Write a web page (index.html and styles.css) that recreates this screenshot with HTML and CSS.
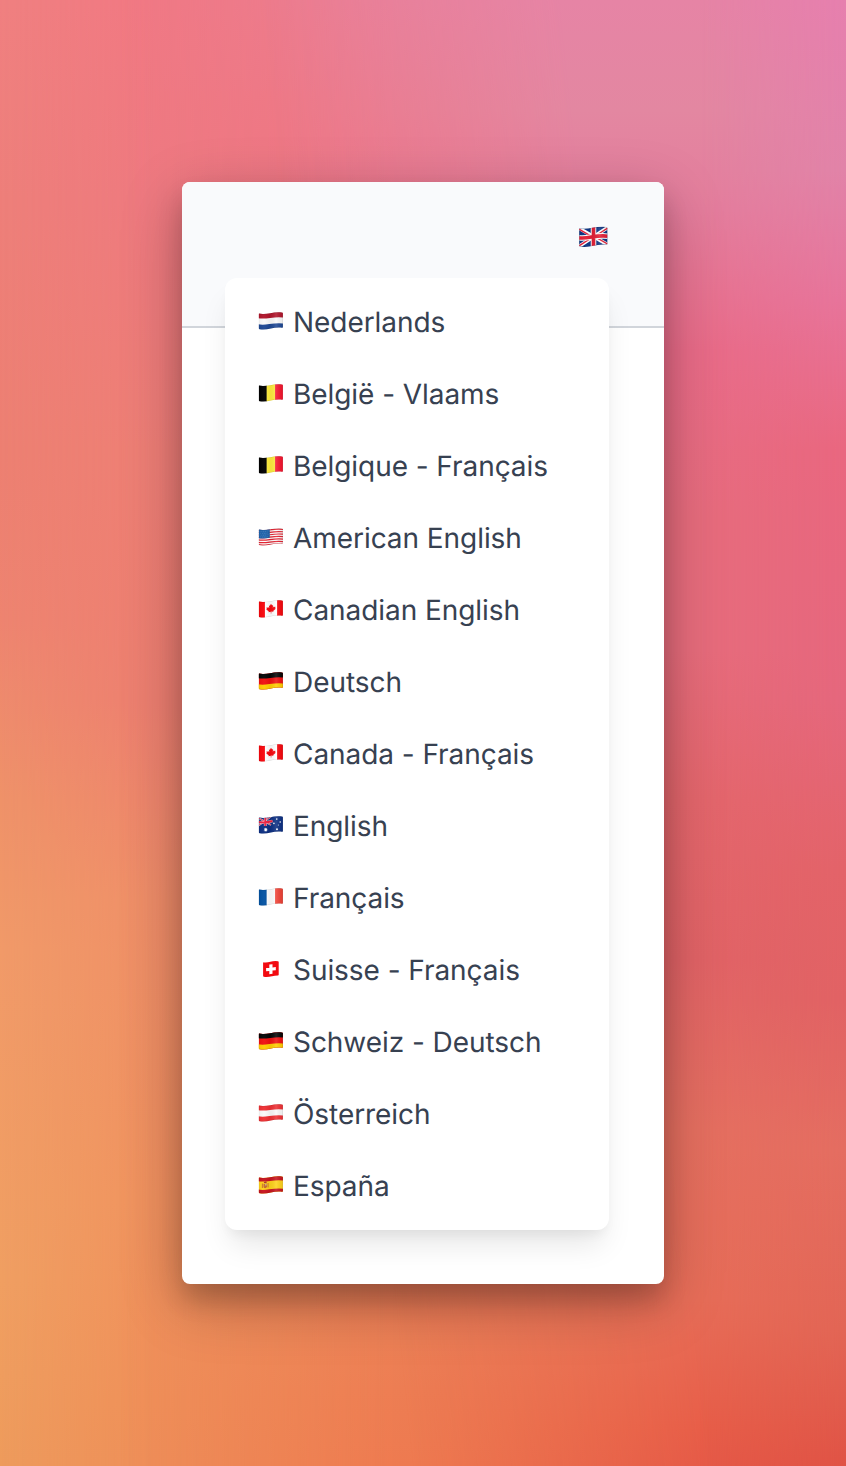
FILE: index.html
```html
<!DOCTYPE html>
<html lang="en">
<head>
<meta charset="utf-8">
<title>Language menu</title>
<link rel="stylesheet" href="styles.css">
</head>
<body>
<svg class="defs" aria-hidden="true">
  <defs>
    <clipPath id="wave"><path d="M.9 2.6C8 4.2 14 .2 23.5 1.4Q24.4 1.6 24.4 2.3V15.9Q24.4 16.9 23.5 16.7C15 15.4 9 19.8 1 18.2Q.2 18 .2 17.3V3.3Q.2 2.4.9 2.6Z"/></clipPath>
    <linearGradient id="shine">
      <stop offset="0" stop-color="#000" stop-opacity=".04"/>
      <stop offset=".22" stop-color="#fff" stop-opacity=".04"/>
      <stop offset=".45" stop-color="#000" stop-opacity=".05"/>
      <stop offset=".72" stop-color="#fff" stop-opacity=".12"/>
      <stop offset="1" stop-color="#000" stop-opacity=".06"/>
    </linearGradient>
    <path id="curve" d="M-1 2.3C8 4.5 14 0 26 1.9"/>
    <path id="fold" d="M.2 2.5C8 4.2 14 .2 24.4 1.6V16.9C15 15.4 9 19.8 .2 18Z" fill="url(#shine)" stroke="#000" stroke-opacity=".22" stroke-width=".6"/>
    <symbol id="de" viewBox="0 0 25 20"><g clip-path="url(#wave)"><path fill="#f01010" d="M0 0h25v20H0z"/><g fill="none" stroke-width="5.4"><use href="#curve" y="2" stroke="#050505"/><use href="#curve" y="13.5" stroke="#ffce00"/></g><use href="#fold"/></g></symbol>
    <symbol id="nl" viewBox="0 0 25 20"><g clip-path="url(#wave)"><path fill="#fafafa" d="M0 0h25v20H0z"/><g fill="none" stroke-width="5.4"><use href="#curve" y="2" stroke="#b0152b"/><use href="#curve" y="13.5" stroke="#1e4894"/></g><use href="#fold"/></g></symbol>
    <symbol id="at" viewBox="0 0 25 20"><g clip-path="url(#wave)"><path fill="#fafafa" d="M0 0h25v20H0z"/><g fill="none" stroke-width="5.4" stroke="#ee3034"><use href="#curve" y="2"/><use href="#curve" y="13.5"/></g><use href="#fold"/></g></symbol>
    <symbol id="be" viewBox="0 0 25 20"><g clip-path="url(#wave)"><path fill="#000" d="M0 0h8.4v20H0z"/><path fill="#ffec3c" d="M8.2 0h8.5v20H8.2z"/><path fill="#f5142d" d="M16.6 0H25v20h-8.4z"/><use href="#fold"/></g></symbol>
    <symbol id="fr" viewBox="0 0 25 20"><g clip-path="url(#wave)"><path fill="#0352a2" d="M0 0h8.4v20H0z"/><path fill="#fff" d="M8.2 0h8.5v20H8.2z"/><path fill="#ef4135" d="M16.6 0H25v20h-8.4z"/><use href="#fold"/></g></symbol>
    <symbol id="ca" viewBox="0 0 25 20"><g clip-path="url(#wave)"><path fill="#fff" d="M0 0h25v20H0z"/><path fill="#f8060c" d="M0 0h6.4v20H0zM18.6 0H25v20h-6.4z"/><path fill="#f8060c" d="m12.5 4.7 1.1 1.9 1-.5-.3 2.6 1.2-1.4.3.8 1.3-.4-.5 1.5.7.5-2.6 2.2.3.9-2.2-.2v1.8h-.5v-1.7l-2.3.6.2-1-2.5-1.8.7-.6-.6-1.3 1.4.1.2-.8 1.4 1.2-.4-2.7 1 .4z"/><use href="#fold"/></g></symbol>
    <symbol id="us" viewBox="0 0 25 20"><g clip-path="url(#wave)"><path fill="#fff" d="M0 0h25v20H0z"/><g fill="none" stroke="#e3202f" stroke-width="1.22"><use href="#curve" y=".6"/><use href="#curve" y="3.05"/><use href="#curve" y="5.5"/><use href="#curve" y="7.95"/><use href="#curve" y="10.4"/><use href="#curve" y="12.85"/><use href="#curve" y="15.3"/></g><path fill="#1d62ab" d="M0 1C5 4 8 2 11.3 1.4V10.6C7 11.6 4 11.9 0 11.2Z"/><g fill="none" stroke="#fff" stroke-opacity=".35" stroke-width=".6" stroke-dasharray=".6 1.2"><path d="M1.2 4.4q5 .8 9.5-.8M1.8 6.2q5 .8 9-.8M1.2 8q5 .8 9.5-.8M1.8 9.8q5 .8 9-.8"/></g><use href="#fold"/></g></symbol>
    <symbol id="au" viewBox="0 0 25 20"><g clip-path="url(#wave)"><path fill="#0c2f83" d="M0 0h25v20H0z"/><path d="m0 3 12.5 7M0 10.5l12.5-9" stroke="#fff" stroke-opacity=".8" stroke-width="1.6"/><path d="m0 3 12.5 7M0 10.5l12.5-9" stroke="#e92640" stroke-width=".9"/><path d="M6.8 1v10M0 7q6 1.3 14-1" fill="none" stroke="#fff" stroke-opacity=".8" stroke-width="2.8"/><path d="M6.8 1v10M0 7q6 1.3 14-1" fill="none" stroke="#ed2140" stroke-width="2"/><g fill="#fff"><path d="m7 12.4.5 1.1 1.2-.3-.4 1.1 1 .6-1.1.5.1 1.2-1-.7-.9.8-.1-1.2-1.2-.3 1-.7-.4-1.2 1.1.3z"/><circle cx="18.3" cy="4.1" r=".8"/><circle cx="15.4" cy="8.4" r=".8"/><circle cx="21.7" cy="7" r=".8"/><circle cx="19.8" cy="10" r=".5"/><circle cx="18.5" cy="14.2" r=".95"/></g><use href="#fold"/></g></symbol>
    <symbol id="es" viewBox="0 0 25 20"><g clip-path="url(#wave)"><path fill="#ffd21b" d="M0 0h25v20H0z"/><g fill="none" stroke-width="4.2" stroke="#c8141e"><use href="#curve" y="1.6"/><use href="#curve" y="14.2"/></g><path fill="#c4682c" d="M3.4 8.5h.9v4.6h-.9zM9.1 8h.9v4.6h-.9zM5 8.7q1.8.5 3.5-.2v3q-.3 1.8-1.8 1.8T5 11.9z"/><path fill="#a73529" d="M5.4 7q1.4-.8 2.7-.2v1.1l-2.7.3z"/><path fill="#d9c5b0" d="M6.8 9.1H8v1.5H6.8z"/><use href="#fold"/></g></symbol>
    <symbol id="ch" viewBox="0 0 25 20"><path fill="#f20a10" d="M5 3.4Q4.5 3 4.6 3.8V17q0 .8.8.8c5 .8 9-1.2 14-1.2q.8 0 .8-.8V3q0-.8-.8-.8-4-.5-7.5.6T5 3.4Z"/><path fill="#fff" d="m10.8 5.6 3.2-.4v3.2l3.3-.3v3.1l-3.3.4v3.2l-3.2.5v-3.2l-3.2.2V9.1l3.2-.2z"/></symbol>
    <symbol id="gb" viewBox="0 0 25 20"><g clip-path="url(#wave)"><path fill="#0b3484" d="M0 0h25v20H0z"/><path d="M0 2.4 25 16.8M0 18 25 1.6" stroke="#fff" stroke-width="3.1"/><path d="m0 3.2 10 5.9M25 16.2l-10-5.6M0 17.7l10-6.5M25 2.2 15 8.5" stroke="#e31e36" stroke-width="1.2"/><path d="M12.5 0v20M0 10.7C8 11.9 14 7.9 25 9.3" fill="none" stroke="#fff" stroke-width="4.8"/><path d="M12.5 0v20M0 10.7C8 11.9 14 7.9 25 9.3" fill="none" stroke="#e31e36" stroke-width="3.1"/><use href="#fold"/></g></symbol>
  </defs>
</svg>
<div class="backdrop">
  <div class="tone tone-1"></div>
  <div class="tone tone-2"></div>
  <div class="tone tone-3"></div>
  <div class="tone tone-4"></div>
  <div class="tone tone-5"></div>
</div>
<main class="window">
  <header class="topbar">
    <svg class="flag flag-current"><use href="#gb"/></svg>
  </header>
  <ul class="menu">
    <li class="item"><svg class="flag"><use href="#nl"/></svg><span>Nederlands</span></li>
    <li class="item"><svg class="flag"><use href="#be"/></svg><span>België - Vlaams</span></li>
    <li class="item"><svg class="flag"><use href="#be"/></svg><span>Belgique - Français</span></li>
    <li class="item"><svg class="flag"><use href="#us"/></svg><span>American English</span></li>
    <li class="item"><svg class="flag"><use href="#ca"/></svg><span>Canadian English</span></li>
    <li class="item"><svg class="flag"><use href="#de"/></svg><span>Deutsch</span></li>
    <li class="item"><svg class="flag"><use href="#ca"/></svg><span>Canada - Français</span></li>
    <li class="item"><svg class="flag"><use href="#au"/></svg><span>English</span></li>
    <li class="item"><svg class="flag"><use href="#fr"/></svg><span>Français</span></li>
    <li class="item"><svg class="flag"><use href="#ch"/></svg><span>Suisse - Français</span></li>
    <li class="item"><svg class="flag"><use href="#de"/></svg><span>Schweiz - Deutsch</span></li>
    <li class="item"><svg class="flag"><use href="#at"/></svg><span>Österreich</span></li>
    <li class="item"><svg class="flag"><use href="#es"/></svg><span>España</span></li>
  </ul>
</main>
</body>
</html>
```
FILE: styles.css
```css
* { box-sizing: border-box; }

body {
  position: relative;
  display: flex;
  justify-content: center;
  height: 1466px;
  margin: 0;
  padding-top: 182px;
  overflow: hidden;
  font-family: Inter, "Liberation Sans", sans-serif;
  text-rendering: geometricPrecision;
}

.defs { position: absolute; width: 0; height: 0; }

/* Vertical colour ramps, each faded in horizontally over the one before. */
.backdrop, .tone { position: absolute; inset: 0; }

.tone-1 { background: linear-gradient(#f08080, #ee7f7a 200px, #ed8072 450px, #ee8470 620px, #ef9269 800px, #f19a69 950px, #f09f62 1280px, #ee9b5c); }
.tone-2 {
  background: linear-gradient(#f17883, #ee7a7f 200px, #ee7f75 450px, #ed8070 700px, #ef9068 900px, #f0945f 1200px, #ef9059 1400px, #ee8f59);
  mask-image: linear-gradient(90deg, transparent, #000 150px);
}
.tone-3 {
  background: linear-gradient(#ea7e93, #ee7788 130px, #e97186 300px, #e5705d 1150px, #ec7f55 1340px, #ee7a50);
  mask-image: linear-gradient(90deg, transparent 120px, #000 400px);
}
.tone-4 {
  background: linear-gradient(#e684a5, #e387a1 110px, #e47d9c 210px, #e96b88 350px, #e76c7d 520px, #e76c7c 650px, #e4666c 800px, #e16366 960px, #e56f60 1130px, #e76d58 1300px, #e75d48 1430px, #e55947);
  mask-image: linear-gradient(84deg, transparent 410px, #000 710px);
}
.tone-5 {
  background: linear-gradient(#e67fae, #e183a8 170px, #e7749b 300px, #e9677f 450px, #e5677d 700px, #e36369 870px, #e16264 1000px, #e46d61 1150px, #e26555 1330px, #e05345);
  mask-image: linear-gradient(90deg, transparent 700px, #000);
}

.window {
  position: relative;
  width: 482px;
  height: 1102px;
  border-radius: 8px;
  background: #fff;
  box-shadow: 0 16px 24px rgba(0, 0, 0, .16), 0 18px 60px rgba(0, 0, 0, .27);
}

.topbar {
  display: flex;
  justify-content: flex-end;
  height: 146px;
  padding: 43px 56px 0 0;
  border-bottom: 2px solid #d1d5db;
  border-radius: 8px 8px 0 0;
  background: #f9fafc;
}

.menu {
  position: absolute;
  top: 96px;
  left: 43px;
  width: 384px;
  margin: 0;
  padding: 8px 0;
  list-style: none;
  border-radius: 12px;
  background: #fff;
  box-shadow: 0 20px 30px -6px rgba(0, 0, 0, .1), 0 8px 12px -4px rgba(0, 0, 0, .05);
}

.item {
  display: flex;
  align-items: center;
  gap: 9px;
  height: 72px;
  padding: 0 33px;
  color: #374151;
  font-size: 28px;
  line-height: 40px;
  letter-spacing: -.06px;
  white-space: nowrap;
}

.flag {
  flex: none;
  width: 26px;
  height: 20px;
  margin-bottom: 3px;
}

.flag-current { width: 29px; height: 24px; }
```
